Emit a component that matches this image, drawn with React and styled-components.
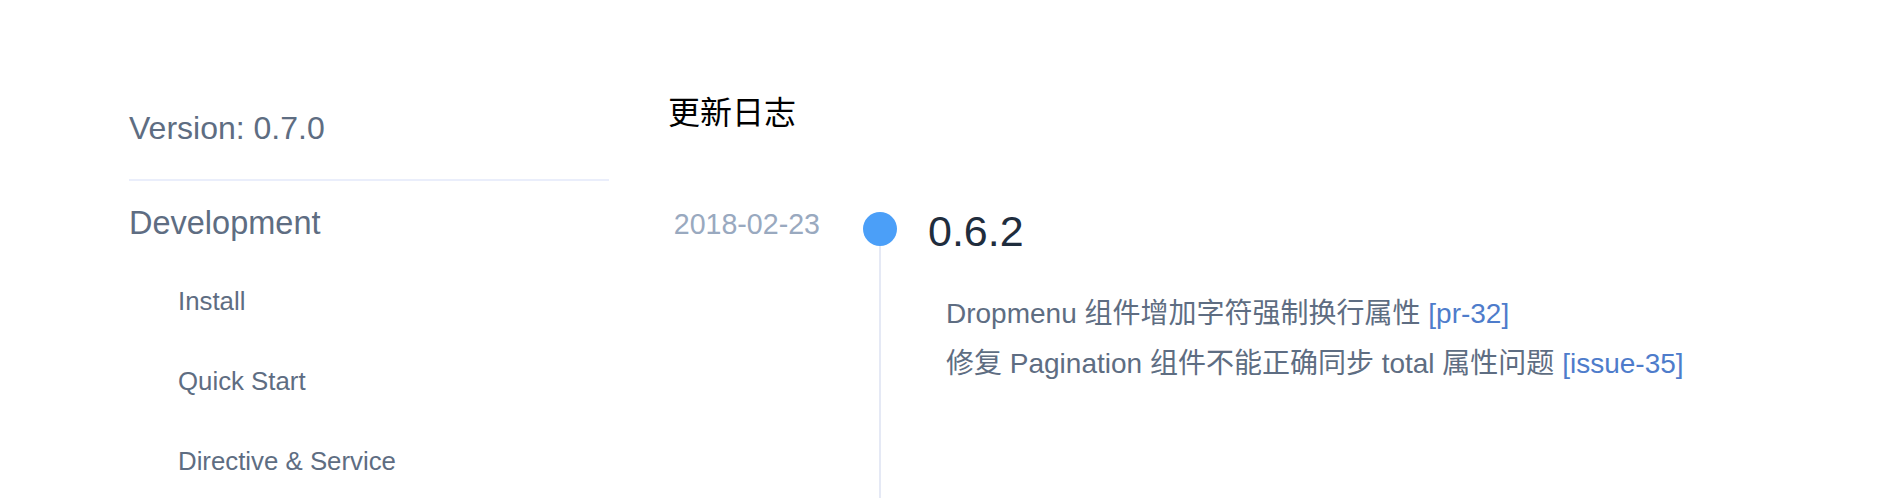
import React from 'react'
import styled, { createGlobalStyle } from 'styled-components'

const GlobalStyle = createGlobalStyle`
  html, body {
    margin: 0;
    padding: 0;
    background: #fff;
    height: 498px;
    overflow: hidden;
  }
  body {
    font-family: "Liberation Sans", Arial, "Noto Sans CJK SC", sans-serif;
  }
`;

const Page = styled.div`
  display: flex;
  align-items: flex-start;
  height: 498px;
  overflow: hidden;
`;

const Sidebar = styled.aside`
  width: 480px;
  margin-left: 129px;
  padding-top: 105px;
  flex-shrink: 0;
`;

const Version = styled.div`
  font-size: 32px;
  line-height: 47px;
  color: #5e6d82;
  padding-bottom: 27px;
  border-bottom: 2px solid #eaeefb;
`;

const Group = styled.div`
  margin-top: 6px;
  font-size: 32.5px;
  line-height: 72px;
  color: #5e6d82;
`;

const NavList = styled.ul`
  list-style: none;
  margin: 2px 0 0;
  padding: 0 0 0 49px;
`;

const NavItem = styled.li`
  font-size: 25.8px;
  line-height: 80px;
  color: #5e6d82;
  white-space: nowrap;
`;

const Content = styled.main`
  margin-left: 59px;
  padding-top: 90px;
  flex: 1;
`;

const Title = styled.h2`
  margin: 0;
  font-weight: 400;
  font-size: 32px;
  line-height: 47px;
  color: #000;
  font-family: "Liberation Sans", "Noto Sans CJK SC", sans-serif;
`;

const Item = styled.section`
  display: flex;
  margin-top: 75px;
  min-height: 320px;
`;

const DateCol = styled.div`
  width: 152px;
  text-align: right;
  font-size: 28.6px;
  line-height: 25px;
  color: #99a9bf;
  flex-shrink: 0;
`;

const Axis = styled.div`
  width: 34px;
  margin-left: 43px;
  display: flex;
  flex-direction: column;
  align-items: center;
  flex-shrink: 0;
`;

const Dot = styled.span`
  width: 34px;
  height: 34px;
  border-radius: 50%;
  background: #4b9ff8;
  flex-shrink: 0;
`;

const Rail = styled.span`
  width: 2px;
  flex: 1;
  background: #e5e9f5;
`;

const Body = styled.div`
  margin-left: 31px;
`;

const Release = styled.h3`
  margin: 0;
  font-weight: 400;
  font-size: 43px;
  line-height: 38px;
  color: #1f2d3d;
`;

const Changes = styled.ul`
  list-style: none;
  margin: 39px 0 0;
  padding: 0 0 0 18px;
`;

const Change = styled.li`
  font-size: 28px;
  line-height: 50px;
  color: #5e6d82;
  white-space: nowrap;
  font-family: "Liberation Sans", "Noto Sans CJK SC", sans-serif;
`;

const Ref = styled.a`
  color: #4e7ccb;
  text-decoration: none;
`;

const nav = ['Install', 'Quick Start', 'Directive & Service'];

const changes = [
  { text: 'Dropmenu 组件增加字符强制换行属性', ref: 'pr-32' },
  { text: '修复 Pagination 组件不能正确同步 total 属性问题', ref: 'issue-35' },
];

export default function App() {
  return (
    <>
      <GlobalStyle />
      <Page>
        <Sidebar>
          <Version>Version: 0.7.0</Version>
          <Group>Development</Group>
          <NavList>
            {nav.map((n) => (
              <NavItem key={n}>{n}</NavItem>
            ))}
          </NavList>
        </Sidebar>
        <Content>
          <Title>更新日志</Title>
          <Item>
            <DateCol>2018-02-23</DateCol>
            <Axis>
              <Dot />
              <Rail />
            </Axis>
            <Body>
              <Release>0.6.2</Release>
              <Changes>
                {changes.map((c) => (
                  <Change key={c.ref}>
                    {c.text} <Ref href="#">[{c.ref}]</Ref>
                  </Change>
                ))}
              </Changes>
            </Body>
          </Item>
        </Content>
      </Page>
    </>
  );
}
